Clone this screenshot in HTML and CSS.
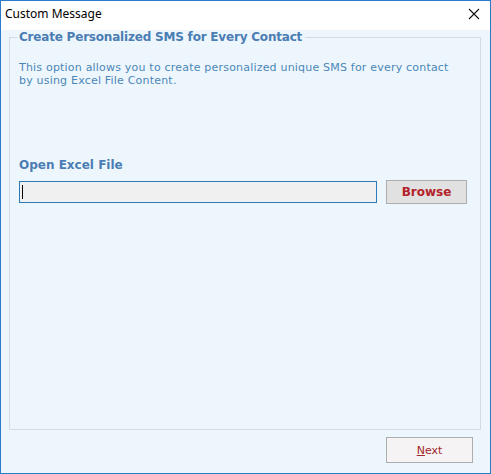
FILE: index.html
```html
<!DOCTYPE html>
<html>
<head>
<meta charset="utf-8">
<link rel="stylesheet" href="styles.css">
</head>
<body>
<div class="window">
  <div class="titlebar">
    <span class="title">Custom Message</span>
    <span class="close">
      <svg width="12" height="12" viewBox="0 0 12 12"><path d="M1 1 L11 11 M11 1 L1 11" stroke="#111" stroke-width="1.1" fill="none"/></svg>
    </span>
  </div>
  <div class="content">
    <fieldset class="group">
      <legend class="legend">Create Personalized SMS for Every Contact</legend>
      <p class="desc">This option allows you to create personalized unique SMS for every contact<br>by using Excel File Content.</p>
      <div class="label">Open Excel File</div>
      <div class="filerow">
        <div class="input"><span class="caret"></span></div>
        <button class="browse">Browse</button>
      </div>
    </fieldset>
    <div class="footer">
      <button class="next"><u>N</u>ext</button>
    </div>
  </div>
</div>
</body>
</html>
```

FILE: styles.css
```css
html, body {
  margin: 0;
  padding: 0;
  width: 491px;
  height: 474px;
  overflow: hidden;
}

.window {
  box-sizing: border-box;
  width: 491px;
  height: 474px;
  border: 1px solid #2a7bcb;
  display: flex;
  flex-direction: column;
  background: #ffffff;
}

.titlebar {
  height: 29px;
  flex: none;
  display: flex;
  align-items: center;
  justify-content: space-between;
  background: #ffffff;
  padding: 0 0 0 4px;
}

.title {
  font-family: "Noto Sans", "DejaVu Sans", sans-serif;
  font-size: 12px;
  color: #000;
  margin-top: -4px;
}

.close {
  width: 32px;
  height: 29px;
  display: flex;
  align-items: center;
  justify-content: center;
  margin-top: -4px;
}

.content {
  flex: 1;
  display: flex;
  flex-direction: column;
  background: #eef6fd;
  padding: 0 9px 10px 8px;
  font-family: "DejaVu Sans", Verdana, sans-serif;
}

.group {
  flex: 1;
  margin: 0;
  padding: 0 9px;
  min-width: 0;
  border: 1px solid #d3dce3;
}

.legend {
  margin-left: -2px;
  padding: 0 3px 0 2px;
  font-weight: bold;
  font-size: 12px;
  line-height: 15px;
  color: #4a7db3;
  letter-spacing: -0.2px;
}

.desc {
  margin: 16px 0 0 0;
  font-size: 11px;
  line-height: 13px;
  color: #4a87b8;
  letter-spacing: 0.2px;
}

.label {
  margin-top: 71px;
  font-weight: bold;
  font-size: 12px;
  line-height: 15px;
  color: #4a7db3;
}

.filerow {
  margin-top: 7px;
  display: flex;
  align-items: center;
  gap: 9px;
}

.input {
  box-sizing: border-box;
  width: 358px;
  height: 22px;
  border: 1px solid #2e7ab6;
  background: #f0f0f0;
  display: flex;
  align-items: center;
  padding-left: 2px;
}

.caret {
  width: 1px;
  height: 14px;
  background: #000;
}

.browse {
  box-sizing: border-box;
  width: 81px;
  height: 24px;
  border: 1px solid #adadad;
  background: #e1e1e1;
  color: #b3232a;
  font-family: "DejaVu Sans", Verdana, sans-serif;
  font-weight: bold;
  font-size: 12px;
  padding: 0;
}

.footer {
  flex: none;
  display: flex;
  justify-content: flex-end;
  padding: 7px 8px 0 0;
}

.next {
  box-sizing: border-box;
  width: 87px;
  height: 26px;
  border: 1px solid #adadad;
  background: #f5f3f3;
  color: #a3262b;
  font-family: "DejaVu Sans", Verdana, sans-serif;
  font-size: 11px;
  padding: 0;
}
```
